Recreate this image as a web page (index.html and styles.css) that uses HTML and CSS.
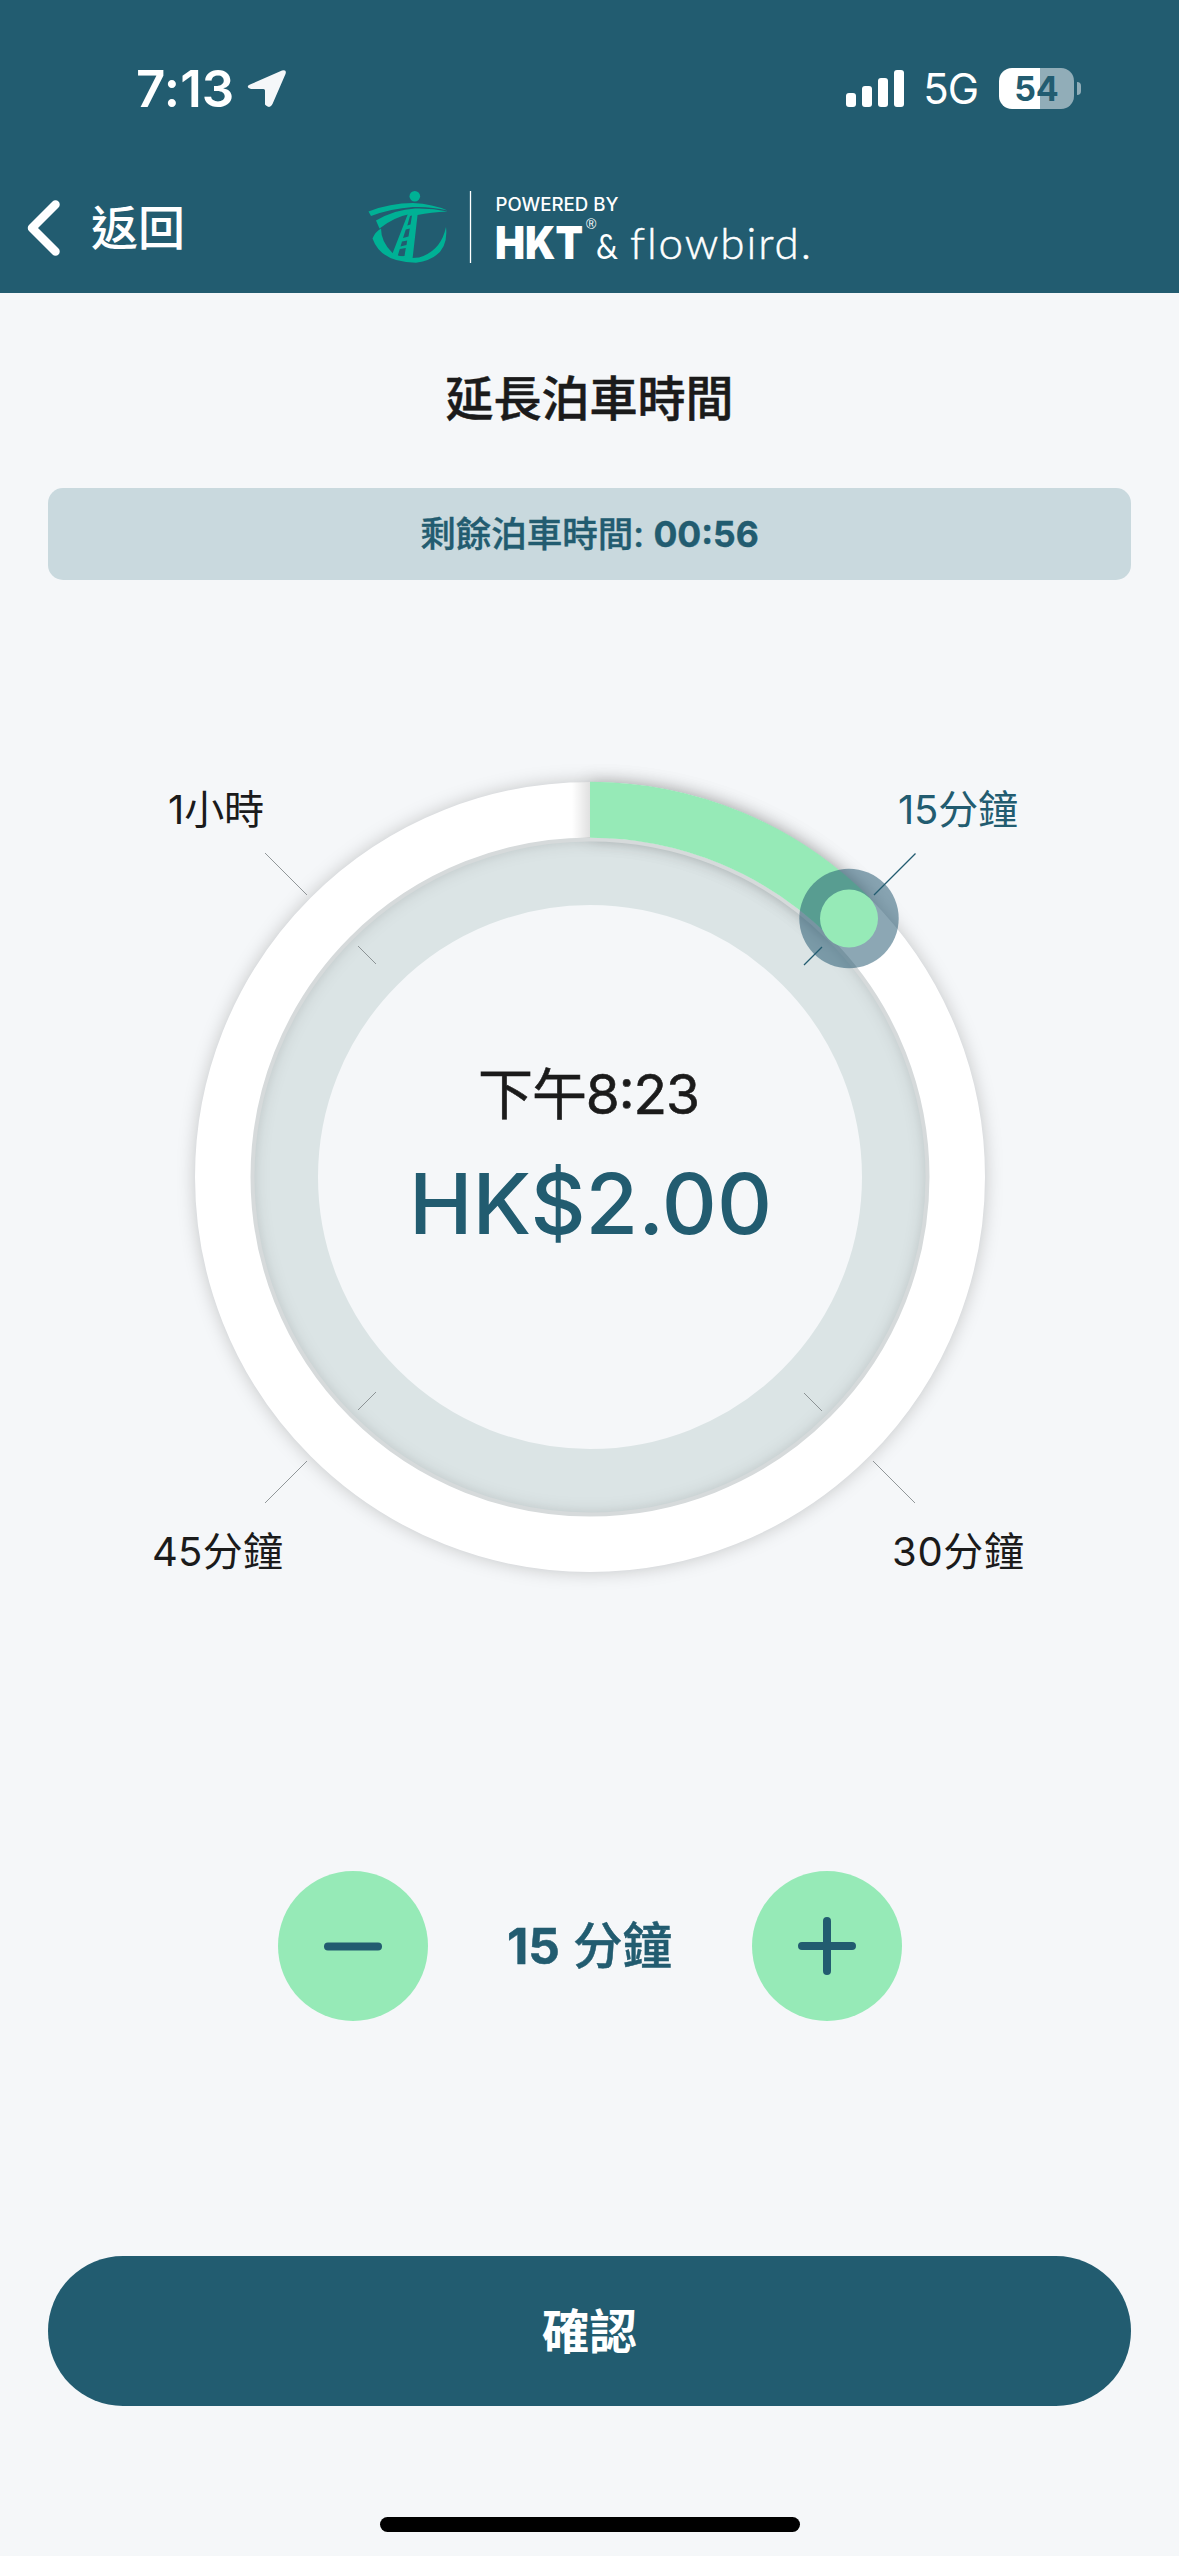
FILE: index.html
```html
<!DOCTYPE html>
<html lang="zh-Hant-HK">
<head>
<meta charset="utf-8">
<meta name="viewport" content="width=1179">
<title>延長泊車時間</title>
<link rel="stylesheet" href="styles.css">
</head>
<body>
<div class="screen">
  <header class="header">
    <div class="status">
      <div class="status-left">
        <span class="clock">7:13</span>
        <svg class="location" width="42" height="42" viewBox="0 0 42 42"><path d="M4 17.500 36 3.500Q41 2 39.500 7L26.500 37Q24 42 20 38.500L19 37.500V23.500Q19 22 17.500 22H5Q-1 20 4 17.500Z"/></svg>
      </div>
      <div class="status-right">
        <svg class="signal" width="58" height="37" viewBox="0 0 58 37"><rect y="23" width="10" height="14" rx="3"/><rect x="16" y="16" width="10" height="21" rx="3"/><rect x="32" y="8" width="10" height="29" rx="3"/><rect x="48" width="10" height="37" rx="3"/></svg>
        <span class="network">5G</span>
        <div class="battery"><span class="battery-body">54</span><span class="battery-cap"></span></div>
      </div>
    </div>
    <nav class="nav">
      <a class="back">
        <svg width="34" height="56" viewBox="0 0 34 56"><path d="M28.500 4.500 5 28 28.500 51.500"/></svg>
        <span class="back-label">返回</span>
      </a>
      <svg class="brand" width="446" height="76" viewBox="366 189 446 76">
        <g class="emblem">
          <circle cx="414.800" cy="196.300" r="5.300"/>
          <path d="M368.500 211.500Q390 203 413 203 433 204 447.500 210.500 431 206.300 413 207 391 208.500 371 216Z"/>
          <path d="M376 220.500Q395 209.500 415 208.500 432 208 447.500 211.500 431 212 417.500 215L410 214Q394 217 379.500 228.500Z"/>
          <path fill-rule="evenodd" d="M409 211H418L412.500 259 391.500 256ZM410 216 407.300 225.500 410.500 224.500 412 215.500ZM405.800 229.500 403 238 408.500 236.500 409.800 228.500ZM402 241.500 400.500 246.500 406.500 245 407.200 240.500ZM399.800 249 397.500 256.500 404.500 256 405.800 248Z"/>
          <path d="M381 228.500Q381 242 392.500 253 405 259.500 419 257.500 441 251 446 227 449.500 258 416 262.700 381 262.500 372.500 238.500 375 232 381 228.500Z"/>
        </g>
        <path class="divider" d="M470.500 191V263"/>
        <text class="powered" x="495.500" y="211" textLength="123" lengthAdjust="spacingAndGlyphs">POWERED BY</text>
        <text class="hkt" x="495" y="259" textLength="88" lengthAdjust="spacingAndGlyphs">HKT</text>
        <text class="registered" x="586" y="228.500">®</text>
        <text class="amp" x="596" y="259" textLength="22" lengthAdjust="spacingAndGlyphs">&amp;</text>
        <text class="flowbird" x="630" y="259" textLength="181">flowbird.</text>
      </svg>
    </nav>
  </header>

  <main class="content">
    <h1 class="title">延長泊車時間</h1>
    <div class="remaining">剩餘泊車時間: <span class="remaining-time">00:56</span></div>

    <svg class="dial" width="1083" height="900" viewBox="48 730 1083 900">
      <defs>
        <filter id="soft" filterUnits="userSpaceOnUse" x="100" y="730" width="980" height="900"><feGaussianBlur stdDeviation="9"/></filter>
        <linearGradient id="cast"><stop offset="0" stop-color="#000" stop-opacity="0"/><stop offset="1" stop-color="#000" stop-opacity=".12"/></linearGradient>
      </defs>
      <circle class="inner-ring" cx="590" cy="1177" r="305.500"/>
      <circle class="ring-shadow" cx="590" cy="1177" r="367"/>
      <path class="progress-shadow" d="M590 809.750A367.250 367.250 0 0 1 849.700 917.300"/>
      <circle class="ring-edge" cx="590" cy="1177" r="339"/>
      <circle class="ring" cx="590" cy="1177" r="367.250"/>
      <path class="progress-cast" d="M572 782H590V838H572Z" fill="url(#cast)"/>
      <path class="progress" d="M590 809.750A367.250 367.250 0 0 1 849.700 917.300"/>
      <circle class="handle-halo" cx="849" cy="918.500" r="49.700"/>
      <circle class="handle" cx="849" cy="918.500" r="29"/>
      <path class="tick" d="M265 853 307 895M358 946 376 964M265 1503 307 1461M358 1410 376 1392M915 1503 873 1461M822 1411 804 1393"/>
      <path class="tick tick-active" d="M915.500 853.500 874 895M822 947 804 965"/>
      <text class="label" x="168" y="824" textLength="96">1小時</text>
      <text class="label label-active" x="898" y="824" textLength="120">15分鐘</text>
      <text class="label" x="152" y="1566" textLength="131">45分鐘</text>
      <text class="label" x="892" y="1566" textLength="132">30分鐘</text>
      <text class="until" x="478" y="1114" textLength="222">下午8:23</text>
      <text class="price" x="409" y="1234" textLength="363" lengthAdjust="spacingAndGlyphs">HK$2.00</text>
    </svg>

    <div class="stepper">
      <button class="step"><svg width="60" height="60" viewBox="0 0 60 60"><path d="M5 30.500H55"/></svg></button>
      <div class="amount"><span class="amount-number">15</span> 分鐘</div>
      <button class="step"><svg width="60" height="60" viewBox="0 0 60 60"><path d="M5 30H55M30 5V55"/></svg></button>
    </div>

    <button class="confirm">確認</button>
  </main>
  <div class="home-indicator"></div>
</div>
</body>
</html>
```
FILE: styles.css
```css
* { box-sizing: border-box; }
body {
  margin: 0;
  background: #f5f7f9;
  color: #1b1b1b;
  font-family: Inter, "Noto Sans CJK TC", sans-serif;
}
button { border: 0; padding: 0; font: inherit; }
svg { display: block; }
.screen {
  width: 1179px;
  height: 2556px;
  display: flex;
  flex-direction: column;
  align-items: center;
  overflow: hidden;
}

.header {
  width: 100%;
  height: 293px;
  background: #225c70;
  color: #fff;
}
.status {
  height: 176px;
  padding: 0 98px 0 136px;
  display: flex;
  justify-content: space-between;
  align-items: center;
}
.status-left, .status-right { display: flex; align-items: center; }
.status-left { gap: 12px; }
.clock { font-size: 51px; font-weight: 600; letter-spacing: .1px; }
.location { fill: #f5f7f9; }
.signal { fill: #fff; }
.network { margin-left: 19px; font-size: 42px; letter-spacing: -1px; }
.battery { margin-left: 21px; display: flex; align-items: center; gap: 3px; }
.battery-body {
  width: 75px;
  height: 41px;
  border-radius: 13px;
  background: linear-gradient(90deg, #fff 54.500%, #91adb8 54.500%);
  color: #225c70;
  font-size: 34px;
  font-weight: 700;
  line-height: 41px;
  text-align: center;
}
.battery-cap { width: 4px; height: 13px; border-radius: 0 5px 5px 0; background: #91adb8; }

.nav {
  height: 117px;
  display: flex;
  align-items: flex-start;
  padding: 13px 0 0 27px;
}
.back {
  width: 339px;
  height: 78px;
  display: flex;
  align-items: center;
  gap: 30px;
  font-size: 47px;
  font-weight: 500;
}
.back-label { padding-bottom: 7px; }
.back svg { fill: none; stroke: #fff; stroke-width: 8.500; stroke-linecap: round; stroke-linejoin: round; }
.brand { fill: #fff; overflow: visible; }
.emblem { fill: #00b195; }
.divider { stroke: #fff; stroke-width: 1.300; }
.powered { font-size: 18px; font-weight: 500; }
.hkt { font-size: 45px; font-weight: 900; }
.registered { font-family: "Liberation Sans", sans-serif; font-size: 14px; }
.amp { font-family: Lato, sans-serif; font-size: 34px; }
.flowbird { font-family: Lato, sans-serif; font-size: 44px; font-weight: 300; font-variant-ligatures: none; stroke: #fff; stroke-width: .5; }

.content {
  width: 1083px;
  height: 2224px;
  display: flex;
  flex-direction: column;
  align-items: center;
}
.title {
  margin: 75px 0 0;
  height: 120px;
  font-size: 48px;
  line-height: 62px;
  font-weight: 500;
  -webkit-text-stroke: .5px currentColor;
}
.remaining {
  width: 100%;
  height: 92px;
  border-radius: 15px;
  background: #c9d9de;
  color: #225c70;
  text-align: center;
  font-size: 35.500px;
  line-height: 93px;
  font-weight: 500;
  -webkit-text-stroke: .4px currentColor;
}
.remaining-time { font-weight: 700; }

.dial { margin-top: 150px; }
.inner-ring { fill: none; stroke: #dbe4e5; stroke-width: 67; }
.ring-shadow { fill: none; stroke: #000; stroke-opacity: .22; stroke-width: 55; filter: url(#soft); }
.progress-shadow { fill: none; stroke: #000; stroke-opacity: .22; stroke-width: 55; filter: url(#soft); }
.ring-edge { fill: none; stroke: #d6dadb; stroke-width: 7; }
.ring { fill: none; stroke: #fff; stroke-width: 55.500; }
.progress { fill: none; stroke: #96eab7; stroke-width: 56; }
.handle-halo { fill: #1e526b; fill-opacity: .51; }
.handle { fill: #96eab7; }
.tick { stroke: #777d80; stroke-width: .8; }
.tick-active { stroke: #225c70; stroke-width: 1.300; }
.label { font-size: 40px; font-weight: 400; fill: #1b1b1b; }
.label-active { fill: #225c70; }
.until { font-size: 55px; font-weight: 400; fill: #1b1b1b; stroke: #1b1b1b; stroke-width: .6; }
.price { font-size: 84px; font-weight: 450; fill: #225c70; }

.stepper {
  width: 624px;
  height: 150px;
  margin-top: 241px;
  display: flex;
  align-items: center;
  justify-content: space-between;
}
.step {
  width: 150px;
  height: 150px;
  border-radius: 50%;
  background: #96eab7;
  display: grid;
  place-items: center;
}
.step path { stroke: #225c70; stroke-width: 8; stroke-linecap: round; }
.amount {
  padding-bottom: 8px;
  color: #225c70;
  font-size: 49.500px;
  font-weight: 500;
  white-space: nowrap;
  -webkit-text-stroke: .5px currentColor;
}
.amount-number { font-weight: 700; }

.confirm {
  width: 100%;
  height: 150px;
  margin-top: 235px;
  padding-bottom: 6px;
  border-radius: 75px;
  background: #225c70;
  color: #fff;
  font-size: 47.500px;
  font-weight: 700;
}
.home-indicator { width: 420px; height: 15px; border-radius: 8px; background: #000; }
```
